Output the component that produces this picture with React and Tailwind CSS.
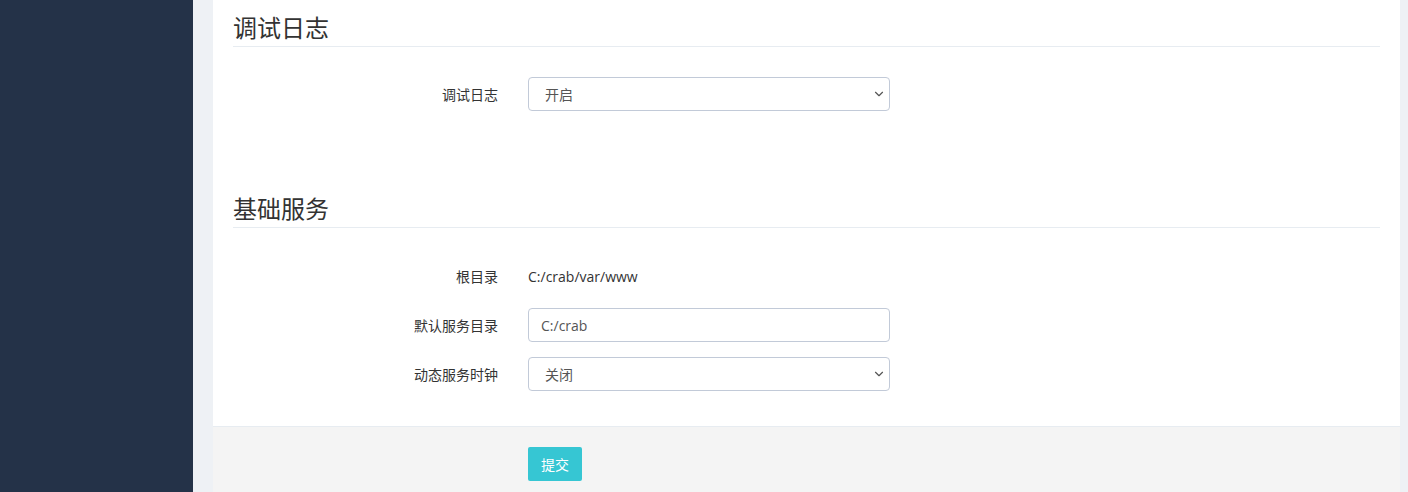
import { ChevronDown } from "lucide-react";

const font = { fontFamily: '"Open Sans", "Noto Sans CJK SC", sans-serif' };

const Label = ({ children }) => (
  <div className="w-[265px] shrink-0 text-right text-[14px] text-[#333]">{children}</div>
);

const Select = ({ value }) => (
  <div className="relative w-[362px]">
    <select
      defaultValue={value}
      className="h-[34px] w-full appearance-none rounded-[4px] border border-[#c2cad8] bg-white pl-4 pr-8 text-[14px] text-[#555] outline-none"
    >
      <option>开启</option>
      <option>关闭</option>
    </select>
    <ChevronDown size={14} strokeWidth={2} className="pointer-events-none absolute right-[4px] top-1/2 -translate-y-1/2 text-[#555]" />
  </div>
);

const Heading = ({ children }) => (
  <div className="border-b border-[#e7ecf1] pt-[15px] pb-[5px]">
    <h3 className="text-[24px] leading-[26px] text-[#333]">{children}</h3>
  </div>
);

export default function App() {
  return (
    <div className="flex h-[492px] overflow-hidden bg-[#eef1f5]" style={font}>
      {/* sidebar */}
      <div className="w-[193px] shrink-0 bg-[#243248]" />

      <div className="ml-[20px] mr-[8px] flex flex-1 flex-col bg-white">
        <div className="px-[20px] pb-[20px]">
          <Heading>调试日志</Heading>
          <div className="mt-[30px] flex items-center gap-[30px]">
            <Label>调试日志</Label>
            <Select value="开启" />
          </div>

          <div className="mt-[70px]">
            <Heading>基础服务</Heading>
          </div>

          <div className="mt-[31px] flex flex-col gap-[15px]">
            <div className="flex h-[34px] items-center gap-[30px]">
              <Label>根目录</Label>
              <div className="text-[14px] text-[#333]">C:/crab/var/www</div>
            </div>
            <div className="flex items-center gap-[30px]">
              <Label>默认服务目录</Label>
              <input
                defaultValue="C:/crab"
                className="h-[34px] w-[362px] rounded-[4px] border border-[#c2cad8] px-3 text-[14px] text-[#555] outline-none"
              />
            </div>
            <div className="flex items-center gap-[30px]">
              <Label>动态服务时钟</Label>
              <Select value="关闭" />
            </div>
          </div>
        </div>

        <div className="mt-[15px] flex-1 border-t border-[#e7ecf1] bg-[#f4f4f4] px-[20px] pt-[20px]">
          <div className="ml-[295px]">
            <button className="h-[34px] w-[54px] rounded-[2px] bg-[#36c6d3] text-[14px] text-white">提交</button>
          </div>
        </div>
      </div>
    </div>
  );
}
